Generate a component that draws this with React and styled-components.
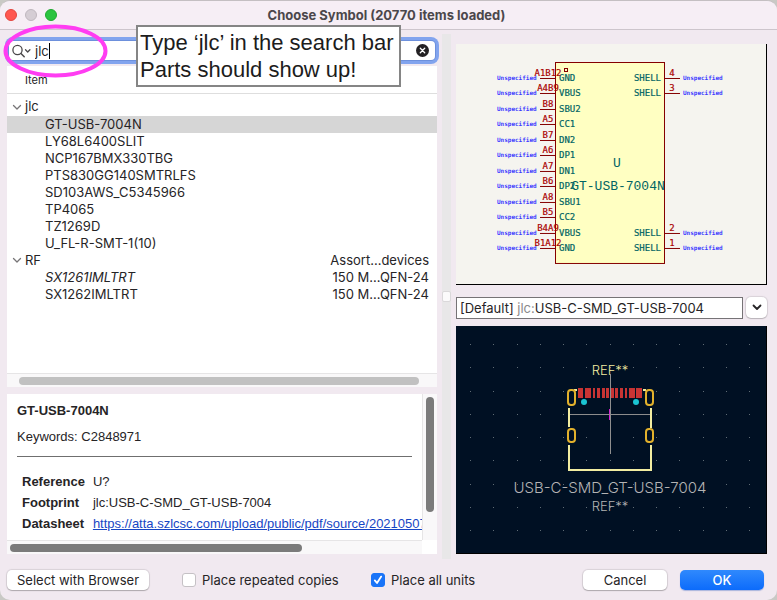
import React, { useState } from "react";
import styled, { createGlobalStyle, css } from "styled-components";

const ui = `Inter, "Liberation Sans", sans-serif`;
const arial = `"Liberation Sans", Arial, sans-serif`;

const GlobalStyle = createGlobalStyle`
  * { box-sizing: border-box; }
  body { margin: 0; background: #c9c9c5; font-family: ${ui}; font-size: 13px; color: #262426; }
  button, input { font: inherit; color: inherit; }
`;

const Dialog = styled.div`
  position: relative;
  display: flex;
  flex-direction: column;
  min-height: 100vh;
  background: #f1e9f0;
  border-top: 1px solid #c4bfc2;
  border-radius: 10px;
  overflow: hidden;
`;

const TitleBar = styled.header`
  display: grid;
  grid-template-columns: 56px 1fr 60px;
  align-items: center;
  height: 29px;
  padding: 0 5px;
  background: #f6eef5;
  border-bottom: 1px solid #cdc5cc;
`;

const Lights = styled.div`
  display: flex;
  gap: 8px;
`;

const Light = styled.button`
  width: 12px;
  height: 12px;
  padding: 0;
  border: 1px solid ${(p) => p.$edge};
  border-radius: 50%;
  background: ${(p) => p.$fill};
`;

const Title = styled.h1`
  margin: 0;
  font-size: 13px;
  font-weight: 700;
  line-height: 16px;
  text-align: center;
  color: #4b474b;
`;

const Main = styled.main`
  flex: 1;
  display: grid;
  grid-template-columns: minmax(0, 430fr) 9px minmax(0, 311fr);
  gap: 5px;
  padding: 4px 10px 0 7px;
`;

const LeftPane = styled.div`
  display: flex;
  flex-direction: column;
  padding-top: 7px;
  padding-bottom: 5px;
`;

const SearchBox = styled.label`
  display: flex;
  align-items: center;
  gap: 2px;
  height: 19px;
  margin: 0 2px;
  padding: 0 6px 0 3px;
  background: #fff;
  border-radius: 4px;
  box-shadow: 0 0 0 1px #6d90dc, 0 0 0 4px #82a4ee;
`;

const SearchInput = styled.input`
  field-sizing: content;
  min-width: 1px;
  max-width: 100%;
  height: 16px;
  padding: 0;
  border: 0;
  border-right: 1px solid #000;
  outline: 0;
  background: transparent;
  caret-color: transparent;
  font-size: 13px;
`;

const Query = styled.span`
  flex: 1;
  display: flex;
  align-items: center;
`;

const ClearButton = styled.button`
  display: flex;
  padding: 0;
  border: 0;
  background: none;
`;

const ListPanel = styled.section`
  flex: 321 1 0;
  display: flex;
  flex-direction: column;
  margin-top: 6px;
  background: #fff;
`;

const Tree = styled.table`
  width: 100%;
  border-collapse: collapse;
  table-layout: fixed;
  line-height: 17px;
`;

const HeadCell = styled.th`
  height: 27px;
  padding: 2px 0 0 18px;
  border-bottom: 1px solid #dedede;
  font-size: 11px;
  font-weight: 400;
  text-align: left;
  width: ${(p) => p.$width || "auto"};
`;

const SpacerCell = styled.td`
  height: 5px;
  padding: 0;
`;

const Row = styled.tr`
  background: ${(p) => (p.$selected ? "#d6d6d6" : "transparent")};
`;

const Cell = styled.td`
  height: 17px;
  padding: 0 8px 0 ${(p) => (p.$child ? 38 : 5)}px;
  white-space: nowrap;
  font-style: ${(p) => (p.$italic ? "italic" : "normal")};
  text-align: ${(p) => (p.$right ? "right" : "left")};
`;

const Twisty = styled.button`
  display: inline-flex;
  align-items: center;
  gap: 3px;
  padding: 0;
  border: 0;
  background: none;
  line-height: 17px;
`;

const scrollThumb = css`
  border-radius: 4px;
  background: ${(p) => (p.$dark ? "#7b7b7b" : "#c1c1c1")};
`;

const HTrack = styled.div`
  height: 14px;
  margin-top: auto;
  padding: 3px ${(p) => p.$end} 3px ${(p) => p.$start};
  background: #f9f8f9;
  border-top: 1px solid #e6e5e6;
`;

const HThumb = styled.div`
  height: 8px;
  ${scrollThumb}
`;

const VTrack = styled.div`
  width: 15px;
  padding: 3px;
  background: #f9f8f9;
  border-left: 1px solid #e6e5e6;
`;

const VThumb = styled.div`
  width: 8px;
  height: 82%;
  ${scrollThumb}
`;

const DetailsPanel = styled.section`
  flex: 160 1 0;
  display: grid;
  grid-template-columns: minmax(0, 1fr) 15px;
  grid-template-rows: minmax(0, 1fr) 14px;
  margin-top: 7px;
  background: #fff;
  font-family: ${arial};
`;

const Details = styled.div`
  padding: 8px 10px 0;
  overflow: hidden;
`;

const PartName = styled.h2`
  margin: 0 0 8px;
  font-size: 13px;
  line-height: 18px;
`;

const Keywords = styled.p`
  margin: 0;
  line-height: 18px;
`;

const Rule = styled.hr`
  margin: 10px 0 14px;
  border: 0;
  border-top: 1px solid #6f6f6f;
`;

const Fields = styled.table`
  margin-left: 5px;
  border-collapse: collapse;
  line-height: 21px;
  white-space: nowrap;

  th { padding: 0 8px 0 0; text-align: left; }
  td { padding: 0; }
  a { color: #1646c4; }
`;

const Sash = styled.div`
  display: flex;
  align-items: center;
  justify-content: center;
  background: #e8e7e8;

  &::after {
    content: "";
    width: 9px;
    height: 9px;
    background: #fbfafb;
    border: 1px solid #dad8da;
    border-radius: 2px;
  }
`;

const RightPane = styled.div`
  display: flex;
  flex-direction: column;
  padding: 10px 0 5px;
`;

const Preview = styled.div`
  flex: ${(p) => p.$grow} 1 0;
  min-height: 0;
  display: flex;
  background: ${(p) => p.$bg};
  border-right: 1px solid #000;
  border-bottom: 1px solid #000;

  svg { width: 100%; height: 100%; }
`;

const ComboRow = styled.div`
  display: flex;
  gap: 3px;
  margin: 12px 0 7px;
`;

const FootprintField = styled.div`
  flex: 1;
  height: 22px;
  padding: 0 3px;
  background: #fff;
  border: 1px solid #767376;
  line-height: 21px;
  white-space: nowrap;
  overflow: hidden;
`;

const Muted = styled.span`
  color: #8b898b;
`;

const DropButton = styled.button`
  display: flex;
  align-items: center;
  justify-content: center;
  width: 21px;
  height: 21px;
  padding: 0;
  border: 0;
  border-radius: 5px;
  background: #fff;
  box-shadow: 0 0 1px 1px rgba(0, 0, 0, 0.1), 0 1px 1px rgba(0, 0, 0, 0.15);
`;

const Footer = styled.footer`
  display: grid;
  grid-template-columns: 175px 189px 1fr 85px 84px;
  align-items: center;
  height: 41px;
  padding: 1px 13px 0 7px;
`;

const PushButton = styled.button`
  justify-self: ${(p) => (p.$start ? "start" : "stretch")};
  height: 20px;
  padding: 0 10px;
  border: 0;
  border-radius: 5px;
  background: #fff;
  line-height: 20px;
  box-shadow: 0 0 1px 1px rgba(0, 0, 0, 0.1), 0 1px 1px rgba(0, 0, 0, 0.2);
  ${(p) =>
    p.$primary &&
    css`
      color: #fff;
      font-weight: 500;
      background: linear-gradient(#3089fd, #0c6bfb);
      box-shadow: 0 1px 1px rgba(0, 60, 180, 0.3);
    `}
`;

const Actions = styled.div`
  grid-column: 4 / 6;
  display: grid;
  grid-template-columns: 84px 84px;
  justify-content: end;
  gap: 13px;
  margin-left: -13px;
`;

const Check = styled.label`
  display: flex;
  align-items: center;
  gap: 6px;
  white-space: nowrap;
`;

const CheckBox = styled.input`
  appearance: none;
  width: 14px;
  height: 14px;
  margin: 0;
  border: 1px solid #c5c1c5;
  border-radius: 3px;
  background: #fff;

  &:checked {
    border-color: #1a74f8;
    background: #1a74f8 url("data:image/svg+xml,%3Csvg xmlns='http://www.w3.org/2000/svg' viewBox='0 0 12 12'%3E%3Cpath d='M2.8 6.4L5 9l4.2-6.4' fill='none' stroke='white' stroke-width='1.8' stroke-linecap='round' stroke-linejoin='round'/%3E%3C/svg%3E") center / 12px 12px;
  }
`;

const Callout = styled.aside`
  position: absolute;
  top: 24px;
  left: 136px;
  padding: 2px 5px 2px 2px;
  border: 2px solid #858585;
  background: #fff;
  font-family: ${arial};
  font-size: 22px;
  line-height: 27px;
  color: #1c1c1c;
  white-space: nowrap;
`;

const Highlight = styled.svg`
  position: absolute;
  top: 22px;
  left: 3px;
  pointer-events: none;
`;

const tree = [
  { name: "jlc", group: true },
  { name: "GT-USB-7004N", selected: true },
  { name: "LY68L6400SLIT" },
  { name: "NCP167BMX330TBG" },
  { name: "PTS830GG140SMTRLFS" },
  { name: "SD103AWS_C5345966" },
  { name: "TP4065" },
  { name: "TZ1269D" },
  { name: "U_FL-R-SMT-1(10)" },
  { name: "RF", group: true, desc: "Assort…devices" },
  { name: "SX1261IMLTRT", italic: true, desc: "150 M…QFN-24" },
  { name: "SX1262IMLTRT", desc: "150 M…QFN-24" },
];

const leftPins = [
  ["A1B12", "GND"], ["A4B9", "VBUS"], ["B8", "SBU2"], ["A5", "CC1"],
  ["B7", "DN2"], ["A6", "DP1"], ["A7", "DN1"], ["B6", "DP2"],
  ["A8", "SBU1"], ["B5", "CC2"], ["B4A9", "VBUS"], ["B1A12", "GND"],
];
const rightPins = [["4", 0], ["3", 1], ["2", 10], ["1", 11]];
const pinY = (i) => Math.round(34 + i * 15.45) + 0.5;

const PinName = styled.text`
  font: 9px "DejaVu Sans Mono", monospace;
  fill: #006464;
  stroke: #006464;
  stroke-width: 0.2px;
`;
const PinNumber = styled.text`
  font: 9px "DejaVu Sans Mono", monospace;
  fill: #a90000;
  stroke: #a90000;
  stroke-width: 0.2px;
  text-anchor: middle;
`;
const PinType = styled.text`
  font: bold 6px "DejaVu Sans Mono", monospace;
  fill: #3c3cff;
`;
const SymbolValue = styled.text`
  font: 13px "Liberation Mono", monospace;
  fill: #006464;
`;
const BoardText = styled.text`
  font: 300 ${(p) => p.$size}px Inter, sans-serif;
  fill: ${(p) => p.$color};
  text-anchor: middle;
`;

function SymbolDrawing() {
  return (
    <svg viewBox="0 0 310 240" role="img" aria-label="Symbol preview">
      <rect x="99.5" y="18.5" width="109" height="201" fill="#ffffc2" stroke="#840000" />
      <rect x="108.5" y="24.5" width="3" height="3" fill="none" stroke="#840000" />
      {leftPins.map(([num, name], i) => (
        <g key={num}>
          <path d={`M84 ${pinY(i)}H99`} stroke="#840000" />
          <PinType x="41" y={pinY(i) + 2}>Unspecified</PinType>
          <PinName x="103" y={pinY(i) + 3}>{name}</PinName>
          <PinNumber x="92" y={pinY(i) - 2}>{num}</PinNumber>
        </g>
      ))}
      {rightPins.map(([num, i]) => (
        <g key={num}>
          <path d={`M209 ${pinY(i)}H224`} stroke="#840000" />
          <PinType x="227" y={pinY(i) + 2}>Unspecified</PinType>
          <PinName x="205" y={pinY(i) + 3} textAnchor="end">SHELL</PinName>
          <PinNumber x="216" y={pinY(i) - 2}>{num}</PinNumber>
        </g>
      ))}
      <SymbolValue x="161" y="123" textAnchor="middle">U</SymbolValue>
      <SymbolValue x="162" y="146" textAnchor="middle">GT-USB-7004N</SymbolValue>
    </svg>
  );
}

const pads = [
  [122, 5], [129, 6], [137, 2], [141, 3], [146, 3], [150, 3],
  [155, 3], [159, 3], [164, 3], [169, 2], [173, 6], [180, 6],
];
const gridX = Array.from({ length: 13 }, (_, i) => Math.round(14 + i * 23.25));
const gridY = Array.from({ length: 9 }, (_, i) => Math.round(18 + i * 23.25));

function FootprintDrawing() {
  return (
    <svg viewBox="0 0 310 227" role="img" aria-label="Footprint preview">
      {gridY.map((y) =>
        gridX.map((x) => <rect key={`${x}-${y}`} x={x} y={y} width="1" height="1" fill="#5f6c75" shapeRendering="crispEdges" />)
      )}
      <path d="M113 82V101M113 119V144H195V119M195 82V102M118 64H121M187 64H190" fill="none" stroke="#f2eda1" strokeWidth="2" />
      {pads.map(([x, w]) => (
        <rect key={x} x={x} y="62" width={w} height="10" fill="#c83434" />
      ))}
      <circle cx="128" cy="76" r="3" fill="#1ac4d2" />
      <circle cx="180" cy="76" r="3" fill="#1ac4d2" />
      {[112, 190].map((x) => (
        <g key={x} fill="#001023" stroke="#e2b12c" strokeWidth="2">
          <rect x={x} y="64" width="7" height="15" rx="3" />
          <rect x={x} y="103" width="7" height="13" rx="3" />
        </g>
      ))}
      <path d="M153.5 83V94" stroke="#d321d3" />
      <BoardText x="154" y="49" $size={13} $color="#f2eda1">REF**</BoardText>
      <path d="M154.5 48V128M114 88.5H194" stroke="#8f8f8f" />
      <BoardText x="154" y="167" $size={15} $color="#b4b4b4">USB-C-SMD_GT-USB-7004</BoardText>
      <BoardText x="154" y="185" $size={13} $color="#b4b4b4">REF**</BoardText>
    </svg>
  );
}

const Chevron = ({ size, width, color }) => (
  <svg width={size} height={size} viewBox="0 0 10 10" fill="none" stroke={color} strokeWidth={width} strokeLinecap="round" strokeLinejoin="round" aria-hidden="true">
    <path d="M1.5 3.5L5 7L8.5 3.5" />
  </svg>
);

export default function App() {
  const [query, setQuery] = useState("jlc");
  const [repeat, setRepeat] = useState(false);
  const [allUnits, setAllUnits] = useState(true);

  return (
    <Dialog>
      <GlobalStyle />
      <TitleBar>
        <Lights>
          <Light aria-label="Close" $fill="#ff5750" $edge="#e2463f" />
          <Light aria-label="Minimize" $fill="#d5cdd4" $edge="#bfb7be" />
          <Light aria-label="Zoom" $fill="#2bc440" $edge="#1fa930" />
        </Lights>
        <Title>Choose Symbol (20770 items loaded)</Title>
      </TitleBar>

      <Main>
        <LeftPane>
          <SearchBox>
            <svg width="21" height="14" viewBox="0 0 21 14" fill="none" stroke="#4a484a" strokeLinecap="round" strokeLinejoin="round" aria-hidden="true">
              <circle cx="5.5" cy="6" r="4.6" strokeWidth="1.3" />
              <path d="M9 9.5L12.2 12.7" strokeWidth="1.5" />
              <path d="M13.5 5.8L15.7 8L17.9 5.8" strokeWidth="1.3" />
            </svg>
            <Query>
              <SearchInput aria-label="Search" value={query} onChange={(e) => setQuery(e.target.value)} />
            </Query>
            <ClearButton aria-label="Clear search" onClick={() => setQuery("")}>
              <svg width="13" height="13" viewBox="0 0 13 13">
                <circle cx="6.5" cy="6.5" r="6.5" fill="#232123" />
                <path d="M4.3 4.3L8.7 8.7M8.7 4.3L4.3 8.7" stroke="#fff" strokeWidth="1.3" strokeLinecap="round" />
              </svg>
            </ClearButton>
          </SearchBox>

          <ListPanel>
            <Tree>
              <thead>
                <tr>
                  <HeadCell>Item</HeadCell>
                  <HeadCell $width="116px" aria-label="Description" />
                </tr>
              </thead>
              <tbody>
                <tr><SpacerCell colSpan={2} /></tr>
                {tree.map((n) => (
                  <Row key={n.name} $selected={n.selected}>
                    <Cell $child={!n.group} $italic={n.italic}>
                      {n.group ? (
                        <Twisty aria-expanded="true">
                          <Chevron size={10} width={1.3} color="#777577" />
                          {n.name}
                        </Twisty>
                      ) : n.name}
                    </Cell>
                    <Cell $right>{n.desc}</Cell>
                  </Row>
                ))}
              </tbody>
            </Tree>
            <HTrack $start="12px" $end="18px"><HThumb /></HTrack>
          </ListPanel>

          <DetailsPanel>
            <Details>
              <PartName>GT-USB-7004N</PartName>
              <Keywords>Keywords: C2848971</Keywords>
              <Rule />
              <Fields>
                <tbody>
                  <tr><th scope="row">Reference</th><td>U?</td></tr>
                  <tr><th scope="row">Footprint</th><td>jlc:USB-C-SMD_GT-USB-7004</td></tr>
                  <tr>
                    <th scope="row">Datasheet</th>
                    <td><a href="#datasheet">https://atta.szlcsc.com/upload/public/pdf/source/20210507</a></td>
                  </tr>
                </tbody>
              </Fields>
            </Details>
            <VTrack><VThumb $dark /></VTrack>
            <HTrack $start="3px" $end="29%"><HThumb $dark /></HTrack>
          </DetailsPanel>
        </LeftPane>

        <Sash />

        <RightPane>
          <Preview $grow={241} $bg="#f5f4ef"><SymbolDrawing /></Preview>
          <ComboRow>
            <FootprintField>[Default] <Muted>jlc:</Muted>USB-C-SMD_GT-USB-7004</FootprintField>
            <DropButton aria-label="Choose footprint"><Chevron size={10} width={1.8} color="#262426" /></DropButton>
          </ComboRow>
          <Preview $grow={228} $bg="#001023"><FootprintDrawing /></Preview>
        </RightPane>
      </Main>

      <Footer>
        <PushButton $start>Select with Browser</PushButton>
        <Check>
          <CheckBox type="checkbox" checked={repeat} onChange={(e) => setRepeat(e.target.checked)} />
          Place repeated copies
        </Check>
        <Check>
          <CheckBox type="checkbox" checked={allUnits} onChange={(e) => setAllUnits(e.target.checked)} />
          Place all units
        </Check>
        <Actions>
          <PushButton>Cancel</PushButton>
          <PushButton $primary>OK</PushButton>
        </Actions>
      </Footer>

      <Highlight width="106" height="56" viewBox="0 0 106 56">
        <ellipse cx="52.5" cy="28" rx="50" ry="24.5" fill="none" stroke="#ff3df2" strokeWidth="4" />
      </Highlight>
      <Callout>
        Type ‘jlc’ in the search bar
        <br />
        Parts should show up!
      </Callout>
    </Dialog>
  );
}
